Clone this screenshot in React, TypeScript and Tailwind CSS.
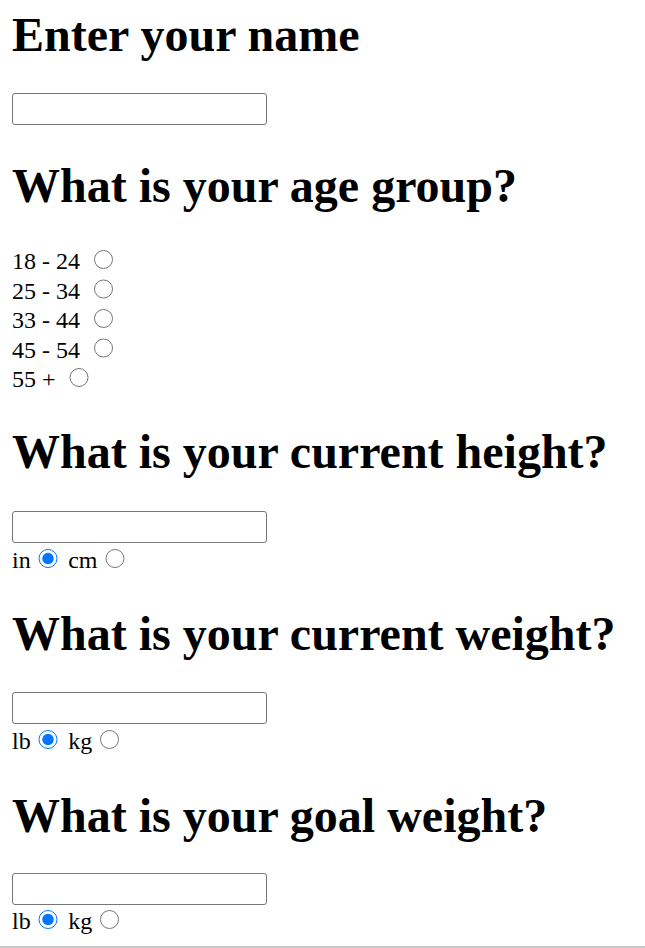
import React from "react";

function Radio({ checked = false }: { checked?: boolean }) {
  return (
    <input
      type="radio"
      defaultChecked={checked}
      className="ml-[7.5px] mr-[4.5px] mt-[4.5px] h-[19.5px] w-[19.5px] align-baseline"
    />
  );
}

function TextBox() {
  return (
    <input
      type="text"
      className="block h-[32px] w-[255px] rounded-[3px] border border-[#767676] bg-white"
    />
  );
}

const h1 = "text-[48px] font-bold leading-[53px] whitespace-nowrap";
const row = "leading-[29.5px] h-[29.5px] whitespace-nowrap";

export default function App() {
  return (
    <div className="min-h-[948px] bg-white font-['Liberation_Serif','Times_New_Roman',serif] text-[24px] text-black">
      <div className="px-[12px]">
        <h1 className={`${h1} pt-[8px] mb-[32px]`}>Enter your name</h1>
        <TextBox />
        <h1 className={`${h1} mt-[34px] mb-[33px]`}>What is your age group?</h1>
        <div className={row}>
          18 - 24 <Radio />
        </div>
        <div className={row}>
          25 - 34 <Radio />
        </div>
        <div className={row}>
          33 - 44 <Radio />
        </div>
        <div className={row}>
          45 - 54 <Radio />
        </div>
        <div className={row}>
          55 + <Radio />
        </div>
        <h1 className={`${h1} mt-[32.5px] mb-[33px]`}>What is your current height?</h1>
        <TextBox />
        <div className={`${row} mt-[1px]`}>
          in<Radio checked /> cm<Radio />
        </div>
        <h1 className={`${h1} mt-[33.5px] mb-[32px]`}>What is your current weight?</h1>
        <TextBox />
        <div className={`${row} mt-[1px]`}>
          lb<Radio checked /> kg<Radio />
        </div>
        <h1 className={`${h1} mt-[34.5px] mb-[31px]`}>What is your goal weight?</h1>
        <TextBox />
        <div className={row}>
          lb<Radio checked /> kg<Radio />
        </div>
      </div>
      <div className="mt-[11.5px] h-[2px] w-full bg-[#c8c8c8]" />
    </div>
  );
}
